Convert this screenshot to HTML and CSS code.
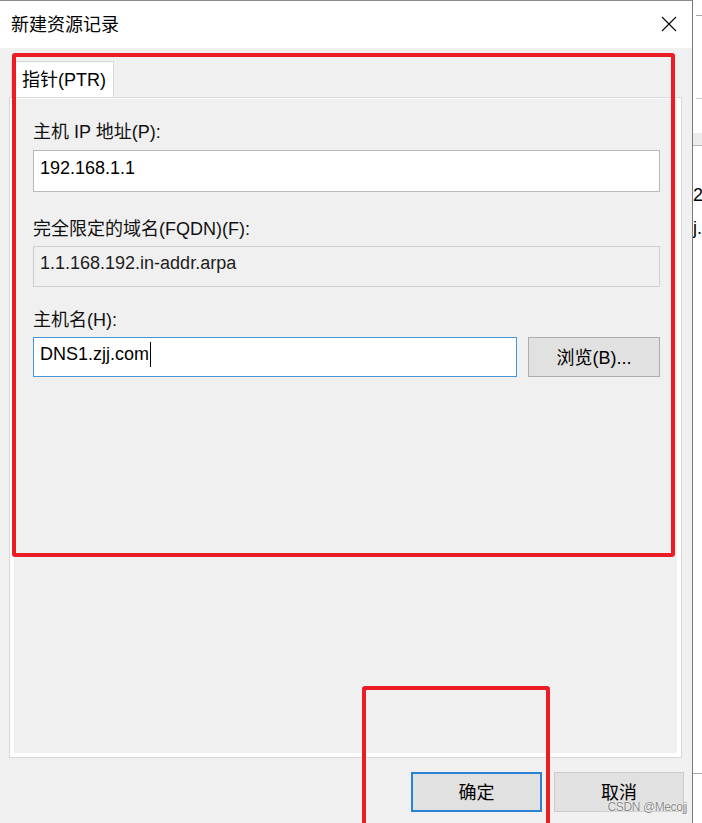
FILE: index.html
```html
<!DOCTYPE html>
<html lang="zh-CN">

<head>
    <meta charset="UTF-8">
    <meta name="viewport" content="width=device-width, initial-scale=1.0">
    <title>新建资源记录</title>
    <link rel="stylesheet" href="styles.css">
</head>

<body>
    <!-- 對話框本體 -->
    <section class="dialog">
        <header class="titleBar">
            <span class="title">新建资源记录</span>
            <svg class="close" width="16" height="16" viewBox="0 0 16 16">
                <path d="M1 1 L15 15 M15 1 L1 15" stroke="#000" stroke-width="1.1" fill="none" />
            </svg>
        </header>

        <div class="content">
            <div class="tabs">
                <div class="tab">指针(PTR)</div>
            </div>

            <div class="panel">
                <label class="label first">主机 IP 地址(P):</label>
                <div class="field">192.168.1.1</div>

                <label class="label">完全限定的域名(FQDN)(F):</label>
                <div class="field readonly">1.1.168.192.in-addr.arpa</div>

                <label class="label last">主机名(H):</label>
                <div class="row">
                    <div class="field focus">DNS1.zjj.com<span class="caret"></span></div>
                    <button class="btn browse">浏览(B)...</button>
                </div>
            </div>

            <div class="actions">
                <button class="btn ok">确定</button>
                <button class="btn">取消</button>
            </div>
        </div>
    </section>

    <!-- 後面那個視窗露出來的一小條 -->
    <aside class="behind">
        <div class="line top"></div>
        <div class="line mid"></div>
        <div class="band"></div>
        <p class="peek first">22</p>
        <p class="peek">j.</p>
        <div class="line bottom"></div>
    </aside>

    <!-- 紅框標註 -->
    <div class="mark markPanel"></div>
    <div class="mark markOk"></div>

    <div class="watermark">CSDN @Mecojj</div>
</body>

</html>
```

FILE: styles.css
```css
html,
body {
    margin: 0;
    height: 100%;
}

body {
    width: 702px;
    height: 823px;
    overflow: hidden;
    display: flex;
    background-color: #ffffff;
    font-family: "Liberation Sans", "Noto Sans CJK SC", sans-serif;
    font-size: 18px;
    color: #000;
    position: relative;
}

.dialog {
    width: 693px;
    height: 823px;
    box-sizing: border-box;
    border-top: 1px solid #8c8c8c;
    border-right: 1px solid #7a7a7a;
    background-color: #f0f0f0;
    display: flex;
    flex-direction: column;
}

.titleBar {
    height: 47px;
    background-color: #ffffff;
    display: flex;
    align-items: center;
    justify-content: space-between;
    padding: 0 15px 0 11px;
}

.title {
    font-size: 18px;
    line-height: 24px;
    margin-top: 1px;
}

.close {
    margin-top: -1px;
}

.content {
    padding: 13px 0 0 9px;
    display: flex;
    flex-direction: column;
}

.tabs {
    display: flex;
    padding-left: 2px;
}

.tab {
    width: 103px;
    height: 36px;
    box-sizing: border-box;
    padding: 0 0 4px 10px;
    background-color: #ffffff;
    border: 1px solid #d9d9d9;
    border-bottom: none;
    display: flex;
    align-items: center;
}

.panel {
    width: 673px;
    height: 661px;
    box-sizing: border-box;
    border: 1px solid #d9d9d9;
    box-shadow: inset 4px 0 0 #fff, inset -4px 0 0 #fff, inset 0 -4px 0 #fff, inset 0 1px 0 #fff;
    padding: 22px 21px 0 23px;
    display: flex;
    flex-direction: column;
}

.label {
    line-height: 24px;
    margin-top: 25px;
    color: #111;
}

.label.first {
    margin-top: 0;
}

.label.last {
    margin-top: 21px;
}

.field {
    height: 42px;
    box-sizing: border-box;
    margin-top: 6px;
    padding: 0 0 6px 6px;
    background-color: #ffffff;
    border: 1px solid #b9b9b9;
    display: flex;
    align-items: center;
}

.field.readonly {
    height: 41px;
    margin-top: 5px;
    background-color: #f0f0f0;
    border-color: #cfcfcf;
    color: #1c1c1c;
}

.row {
    display: flex;
    gap: 11px;
    margin-top: 5px;
}

.row .field {
    flex: 1;
    height: 40px;
    margin-top: 0;
}

.field.focus {
    border-color: #4a94d8;
}

.caret {
    display: inline-block;
    width: 1px;
    height: 25px;
    margin-left: 1px;
    background-color: #000;
}

.btn {
    font-family: inherit;
    font-size: 18px;
    color: #000;
    background-color: #e1e1e1;
    border: 1px solid #adadad;
    height: 40px;
    padding: 0 0 3px;
}

.browse {
    width: 132px;
    flex: none;
}

.actions {
    display: flex;
    justify-content: flex-end;
    gap: 12px;
    margin-top: 14px;
    padding-right: 8px;
}

.actions .btn {
    width: 130px;
    border-color: #cccccc;
}

.actions .ok {
    width: 131px;
    border: 2px solid #2a83d6;
}

.behind {
    flex: 1;
    display: flex;
    flex-direction: column;
    overflow: hidden;
}

.line {
    height: 1px;
    background-color: #a8a8a8;
    margin-left: 3px;
}

.line.top {
    margin-top: 15px;
}

.line.mid {
    margin-top: 82px;
    background-color: #c8c8c8;
}

.band {
    height: 12px;
    margin-top: 34px;
    background-color: #ececec;
    border-bottom: 1px solid #b8b8b8;
}

.peek {
    margin: 0;
    line-height: 24px;
    white-space: nowrap;
    color: #000;
}

.peek.first {
    margin-top: 37px;
}

.peek + .peek {
    margin-top: 9px;
}

.line.bottom {
    margin-top: auto;
    margin-bottom: 49px;
    margin-left: 0;
}

.mark {
    position: absolute;
    border: 4px solid #ec1c24;
    border-radius: 3px;
    box-sizing: border-box;
}

.markPanel {
    left: 12px;
    top: 53px;
    width: 663px;
    height: 504px;
}

.markOk {
    left: 362px;
    top: 686px;
    width: 188px;
    height: 160px;
}

.watermark {
    position: absolute;
    right: 15px;
    top: 800px;
    font-size: 12px;
    line-height: 14px;
    letter-spacing: -0.4px;
    color: #8a8a8a;
    text-shadow: 0 0 2px #fff, 0 0 1px #fff;
}
```
